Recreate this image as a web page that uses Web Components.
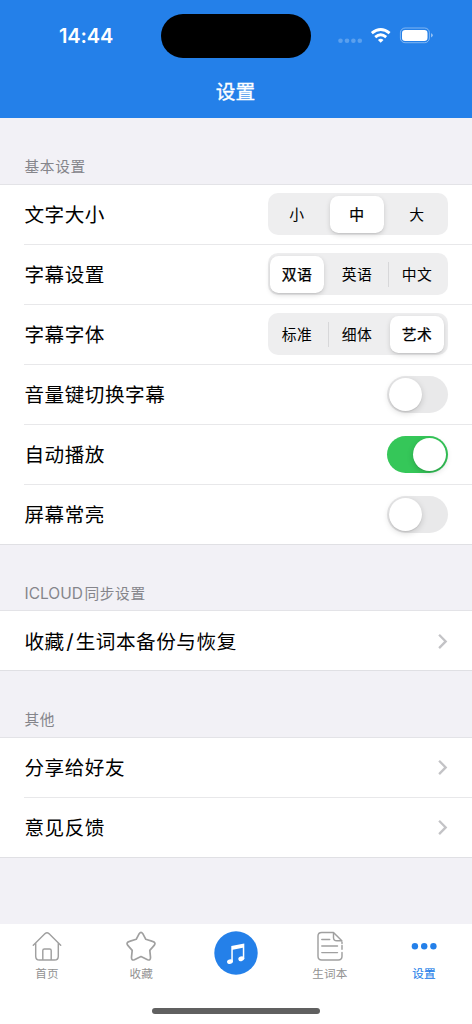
<!DOCTYPE html>
<html lang="zh-CN">
<head>
<meta charset="utf-8">
<title>设置</title>
<style>
html,body{margin:0;padding:0;background:#f2f1f6}
body{font-family:Inter,"Noto Sans CJK SC",sans-serif;color:#000}
</style>
</head>
<body>
<settings-app></settings-app>
<script>
const define = (name, html) => customElements.define(name, class extends HTMLElement {
  constructor() {
    super();
    this.attachShadow({ mode: 'open' }).innerHTML = typeof html === 'function' ? html(this) : html;
  }
});

define('status-header', `<style>
:host{display:grid;grid-template-rows:71px 1fr;height:117.5px;background:#2480e9;color:#fff}
.status{display:grid;grid-template-columns:161px 150px 161px}
.time{padding:24px 0 0 59px;font-size:20px;line-height:24px;font-weight:600;letter-spacing:-.1px}
.island{height:44px;margin-top:14px;border-radius:22px;background:#000}
.icons{padding:26px 0 0 27px}
svg{display:block}
h1{margin:0;padding:7px 1px 0 0;text-align:center;font-size:19.7px;line-height:28px;font-weight:400;-webkit-text-stroke:.35px #fff}
</style>
<div class="status"><div class="time">14:44</div><div class="island"></div>
<div class="icons"><svg width="96" height="20" viewBox="338 26 96 20">
<g fill="#fff" fill-opacity=".25"><circle cx="340.5" cy="40.8" r="2.3"/><circle cx="347" cy="40.8" r="2.3"/><circle cx="353.4" cy="40.8" r="2.3"/><circle cx="359.8" cy="40.8" r="2.3"/></g>
<g fill="none" stroke="#fff" stroke-width="2.9"><path d="M371.8 33.2Q380.7 25.8 389.6 33.2"/><path d="M375.2 37.1Q380.7 32.5 386.2 37.1"/></g>
<path d="M377.9 39.9Q380.7 37.6 383.5 39.9L380.7 42.8Z" fill="#fff"/>
<rect x="400.4" y="28" width="29" height="14.7" rx="4.7" fill="none" stroke="#fff" stroke-opacity=".42"/>
<rect x="402" y="30" width="25.5" height="11" rx="3.2" fill="#fff"/>
<path d="M431 33.2Q432.8 33.8 432.8 35.3T431 37.4Z" fill="#fff" fill-opacity=".5"/>
</svg></div></div><h1>设置</h1>`);

define('settings-group', el => `<style>
:host{display:block}
h2{box-sizing:border-box;margin:0;height:66px;padding:38px 24.5px 0;font-size:14.7px;line-height:22px;font-weight:400;letter-spacing:.65px;color:#85858b}
:host(:not(:first-child)) h2{height:65.6px}
h2 span{letter-spacing:0;font-size:15.5px;margin-right:1.5px}
.rows{border-top:1px solid #e3e3e7;border-bottom:1px solid #e0e0e4;background:#fff}
</style><h2>${el.hasAttribute('latin') ? `<span>${el.getAttribute('latin')}</span>` : ''}${el.getAttribute('heading')}</h2><div class="rows"><slot></slot></div>`);

define('settings-row', el => `<style>
:host{display:flex;box-sizing:border-box;height:60px;margin-left:24.4px;padding-right:24.4px;align-items:center;justify-content:space-between;border-bottom:1px solid #e8e8ea}
:host(:last-child){height:59px;border-bottom:0}
.label{padding-top:2px;font-size:19.6px;line-height:28px;letter-spacing:.55px;white-space:nowrap}
.slash{padding:0 1.5px;font-size:20.5px}
svg{display:block}
</style><span class="label">${el.getAttribute('label').replace('/', '<span class="slash">/</span>')}</span><slot>${el.hasAttribute('link') ? '<svg width="10" height="16" viewBox="0 0 10 16"><path d="M1.1 1.7 7.7 8.4 1.1 15.1" fill="none" stroke="#c3c3c6" stroke-width="2.3"/></svg>' : ''}</slot>`);

define('segment-control', el => {
  const selected = Number(el.getAttribute('selected'));
  const items = el.getAttribute('items').split(',');
  const cells = items.map((t, i) => `<span class="${i === selected ? 'on' : ''}${i > 0 && i !== selected && i - 1 !== selected ? ' line' : ''}"><b>${t}</b></span>`).join('');
  return `<style>
:host{display:grid;grid-template-columns:repeat(3,60px);width:180px;height:42px;border-radius:10px;background:#eeeeef}
span{display:flex;align-items:center;justify-content:center;box-sizing:border-box;padding:2.5px}
.line{background:linear-gradient(#d7d7d9,#d7d7d9) left center/1px 25px no-repeat}
b{display:flex;box-sizing:border-box;align-items:center;justify-content:center;width:54px;height:37px;padding-bottom:1px;margin-right:1.4px;border-radius:8.5px;font-size:14.8px;letter-spacing:.3px;font-weight:400}
.on b{background:#fff;box-shadow:0 2px 5px rgba(0,0,0,.15),0 1px 1px rgba(0,0,0,.06);-webkit-text-stroke:.25px #000}
</style>${cells}`;
});

define('toggle-switch', `<style>
:host{display:flex;box-sizing:border-box;width:61px;height:37px;padding:2px;border-radius:18.5px;background:#e9e9ea}
:host([on]){justify-content:flex-end;background:#35c759}
i{width:33px;height:33px;border-radius:50%;background:#fff;box-shadow:0 2px 6px rgba(0,0,0,.17),0 1px 1px rgba(0,0,0,.08)}
</style><i></i>`);

const icons = {
  home: '<path d="M1.3 14.2 13.1 2.6Q15 .9 16.9 2.6L28.7 14.2M3.7 12V25.2Q3.7 29 7.5 29H22.5Q26.3 29 26.3 25.2V12M10.8 29V19.6Q10.8 18 12.4 18H17.6Q19.2 18 19.2 19.6V29"/>',
  star: '<path d="M13.2 2.7Q15 .2 16.8 2.7L19.8 8.3 26.5 10.4Q30.1 11.4 28.4 14.1L23.8 19.4 24.5 26.2Q24.7 29.8 21.6 28.8L15 25.6 8.4 28.8Q5.3 29.8 5.5 26.2L6.2 19.4 1.6 14.1Q-.1 11.4 3.5 10.4L10.2 8.3Z" stroke-width="1.7"/>',
  book: '<path d="M27 21.5V25.3Q27 29 23.3 29H6.7Q3 29 3 25.3V5Q3 1.4 6.7 1.4H18.5L26.8 9.8M18.5 1.4V6.5Q18.5 9.8 21.8 9.8H26.8M27 11V12.5M27 14.5V18.2M6.8 8.5H14.7M6.8 15H22.5M6.8 21.6H22.5"/>',
  more: '<g fill="#2480e9" stroke="none"><circle cx="5.9" cy="15.2" r="3.2"/><circle cx="15.2" cy="15.2" r="3.2"/><circle cx="24.4" cy="15.2" r="3.2"/></g>'
};
define('tab-item', el => `<style>
:host{display:flex;flex-direction:column;align-items:center;padding-top:7px;color:#929292}
:host([active]){color:#2480e9}
svg{display:block}
.cap{margin-top:5px;font-size:11.6px;line-height:17px;letter-spacing:.2px}
:host([active]) .cap{-webkit-text-stroke:.15px #2480e9}
</style>${el.getAttribute('icon') === 'music'
  ? `<svg width="44" height="44" viewBox="214 931 44 44"><circle cx="236" cy="953" r="21.7" fill="#2480e9"/><path d="M231.3 946.1 244.3 943.4V959H242.8V947.7L232.8 949.8V961.8H231.3Z" fill="#fff"/><ellipse cx="230" cy="961.6" rx="3" ry="2.3" fill="#fff" transform="rotate(-18 230 961.6)"/><ellipse cx="241.3" cy="958.7" rx="3" ry="2.3" fill="#fff" transform="rotate(-18 241.3 958.7)"/></svg>`
  : `<svg width="30" height="30" viewBox="0 0 30 30" fill="none" stroke="#a0a0a0" stroke-width="1.45" stroke-linecap="round" stroke-linejoin="round">${icons[el.getAttribute('icon')]}</svg><span class="cap">${el.getAttribute('label')}</span>`}`);

define('tab-bar', `<style>
:host{display:flex;flex-direction:column;justify-content:space-between;align-items:center;height:100px;background:#fff}
nav{display:grid;grid-template-columns:repeat(5,94.25px);align-self:flex-start}
.home{width:168px;height:6px;margin-bottom:10px;border-radius:3px;background:#606060}
</style><nav><slot></slot></nav><div class="home"></div>`);

define('settings-app', `<style>
:host{display:flex;flex-direction:column;height:1024px;overflow:hidden}
main{flex:1;min-height:0}
</style><status-header></status-header>
<main>
<settings-group heading="基本设置">
<settings-row label="文字大小"><segment-control items="小,中,大" selected="1"></segment-control></settings-row>
<settings-row label="字幕设置"><segment-control items="双语,英语,中文" selected="0"></segment-control></settings-row>
<settings-row label="字幕字体"><segment-control items="标准,细体,艺术" selected="2"></segment-control></settings-row>
<settings-row label="音量键切换字幕"><toggle-switch></toggle-switch></settings-row>
<settings-row label="自动播放"><toggle-switch on></toggle-switch></settings-row>
<settings-row label="屏幕常亮"><toggle-switch></toggle-switch></settings-row>
</settings-group>
<settings-group latin="ICLOUD" heading="同步设置"><settings-row label="收藏/生词本备份与恢复" link></settings-row></settings-group>
<settings-group heading="其他"><settings-row label="分享给好友" link></settings-row><settings-row label="意见反馈" link></settings-row></settings-group>
</main>
<tab-bar>
<tab-item icon="home" label="首页"></tab-item><tab-item icon="star" label="收藏"></tab-item><tab-item icon="music"></tab-item><tab-item icon="book" label="生词本"></tab-item><tab-item icon="more" label="设置" active></tab-item>
</tab-bar>`);
</script>
</body>
</html>
